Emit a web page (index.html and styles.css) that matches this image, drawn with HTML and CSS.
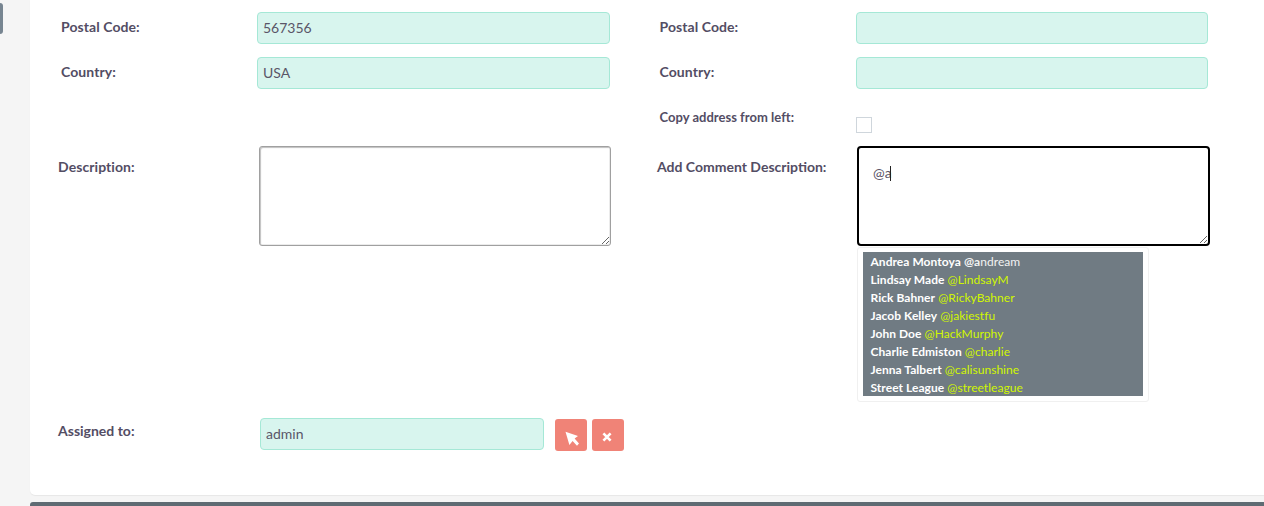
FILE: index.html
```html
<!DOCTYPE html>
<html lang="en">
<head>
<meta charset="utf-8">
<title>Edit record</title>
<link rel="stylesheet" href="styles.css">
</head>
<body>
<div class="side-tab"></div>
<main class="panel">
  <form class="form">
    <div class="row row-address">
      <label class="label">Postal Code:</label>
      <input class="field" type="text" value="567356">
      <label class="label label-right">Postal Code:</label>
      <input class="field field-right" type="text">
    </div>
    <div class="row row-address row-country">
      <label class="label">Country:</label>
      <input class="field" type="text" value="USA">
      <label class="label label-right">Country:</label>
      <input class="field field-right" type="text">
    </div>
    <div class="row row-copy">
      <label class="label-copy">Copy address from left:</label>
      <input class="check" type="checkbox">
    </div>
    <div class="row row-desc">
      <label class="label label-desc">Description:</label>
      <textarea class="area"></textarea>
      <label class="label label-desc label-comment">Add Comment Description:</label>
      <div class="comment-box">
        <textarea class="area area-active">@a</textarea>
        <span class="caret"></span>
        <div class="mention-menu">
          <ul class="mention-list">
            <li><b>Andrea Montoya</b> <span class="handle-active"><b>@a</b>ndream</span></li>
            <li><b>Lindsay Made</b> <span class="handle">@LindsayM</span></li>
            <li><b>Rick Bahner</b> <span class="handle">@RickyBahner</span></li>
            <li><b>Jacob Kelley</b> <span class="handle">@jakiestfu</span></li>
            <li><b>John Doe</b> <span class="handle">@HackMurphy</span></li>
            <li><b>Charlie Edmiston</b> <span class="handle">@charlie</span></li>
            <li><b>Jenna Talbert</b> <span class="handle">@calisunshine</span></li>
            <li><b>Street League</b> <span class="handle">@streetleague</span></li>
          </ul>
        </div>
      </div>
    </div>
    <div class="row row-assign">
      <label class="label label-desc">Assigned to:</label>
      <input class="field field-assign" type="text" value="admin">
      <button class="btn btn-select" type="button" aria-label="Select">
        <svg width="16" height="16" viewBox="0 0 16 16"><path d="M1.5 0.8 L14 5 L10.6 7.6 L15 12.6 L13 14.8 L8.6 10 L5.4 14 Z" fill="#fff"/></svg>
      </button>
      <button class="btn btn-clear" type="button" aria-label="Clear">
        <svg class="clear-icon" width="10" height="10" viewBox="0 0 10 10"><path d="M1.4 1.4 L8.6 8.6 M8.6 1.4 L1.4 8.6" stroke="#fff" stroke-width="2.6" fill="none"/></svg>
      </button>
    </div>
  </form>
</main>
<div class="bottom-bar"></div>
</body>
</html>
```
FILE: styles.css
```css
* { box-sizing: border-box; }
html, body { margin: 0; height: 506px; overflow: hidden; }
body {
  position: relative;
  background: #f5f5f5;
  font-family: Lato, "Liberation Sans", sans-serif;
  font-size: 14px;
  color: #534d64;
}
.side-tab {
  position: absolute;
  left: 0;
  top: 3px;
  width: 3px;
  height: 31px;
  background: #778591;
  border-radius: 0 3px 3px 0;
}
.panel {
  margin-left: 30px;
  height: 495px;
  background: #fff;
  border-radius: 0 0 0 5px;
  box-shadow: 0 1px 1px rgba(0,0,0,0.06);
}
.form { padding-top: 12px; }
.row { display: flex; align-items: flex-start; }
.row-address { height: 32px; padding-left: 31px; }
.row-country { margin-top: 13px; }
.label { font-weight: 700; line-height: 17px; padding-top: 6px; width: 196px; flex: none; letter-spacing: 0.07px; }
.label-right { margin-left: 49.5px; margin-right: 0.5px; }
.field {
  flex: none;
  width: 353px;
  height: 32px;
  padding: 0 5px 2px;
  background: #d8f5ee;
  border: 1px solid #a5e8d6;
  border-radius: 4px;
  font: 14px Lato, sans-serif;
  color: #5a5568;
  outline: none;
}
.field-right { width: 352px; }
.row-copy { height: 57px; padding-left: 629.5px; padding-top: 20px; }
.label-copy { font-size: 13px; font-weight: 700; line-height: 16px; width: 196.5px; flex: none; letter-spacing: 0.02px; }
.check {
  appearance: none;
  flex: none;
  width: 16px;
  height: 16px;
  margin: 8px 0 0 0;
  background: #fff;
  border: 1px solid #cfd6dc;
}
.row-desc { height: 272px; padding-left: 28px; }
.label-desc { width: 201px; padding-top: 12px; }
.area {
  flex: none;
  display: block;
  width: 352px;
  height: 100px;
  padding: 15px;
  background: #fff;
  border: 1px solid #a0a0a0;
  border-radius: 3px;
  font: 14px Lato, sans-serif;
  color: #5a5568;
  outline: none;
  box-shadow: inset 1px 1px 1px rgba(0,0,0,0.25), inset -1px -1px 0 rgba(0,0,0,0.08);
}
.label-comment { width: 200px; margin-left: 46px; letter-spacing: 0; }
.comment-box { position: relative; flex: none; width: 353px; }
.area-active { width: 352.5px; padding: 14px; padding-top: 16px; border: 2px solid #000; border-radius: 4px; box-shadow: none; }
.caret {
  position: absolute;
  left: 33px;
  top: 20px;
  width: 1px;
  height: 15px;
  background: #222;
}
.mention-menu {
  width: 292px;
  height: 155px;
  margin-top: 1px;
  padding: 4px 5px 5px;
  background: #fff;
  border: 1px solid #f0f0f0;
  border-radius: 3px;
}
.mention-list {
  height: 144px;
  margin: 0;
  padding: 1px 0 0 7.5px;
  list-style: none;
  background: #707b83;
  color: #fff;
  font-size: 12px;
  line-height: 18px;
  letter-spacing: 0.04px;
}
.mention-list b { font-weight: 700; }
.handle { color: #d0f700; }
.handle-active { color: #f2f2f2; }
.row-assign { padding-left: 28px; }
.field-assign { width: 284px; margin-right: 11px; }
.row-assign .label-desc { width: 202px; padding-top: 4px; letter-spacing: 0; }
.btn {
  flex: none;
  display: flex;
  width: 32px;
  height: 32px;
  padding: 0;
  margin-top: 1px;
  background: #f08377;
  border: none;
  border-radius: 3px;
}
.btn-select { align-items: flex-start; justify-content: flex-start; padding: 12px 0 0 9px; }
.btn-clear { align-items: center; justify-content: center; margin-left: 5px; }
.clear-icon { margin: 3px 1.5px 0 0; }
.bottom-bar {
  position: absolute;
  left: 30px;
  right: 0;
  top: 502px;
  height: 4px;
  background: #5f6b73;
  border-radius: 3px 0 0 0;
}
```
